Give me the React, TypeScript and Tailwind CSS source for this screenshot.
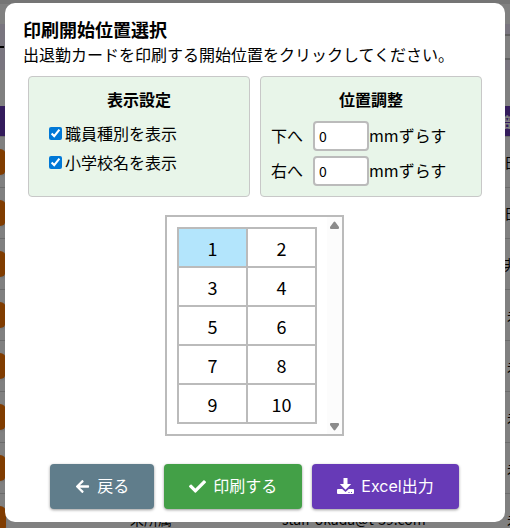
import type { ReactNode } from "react";
import { FaArrowLeft, FaCheck } from "react-icons/fa";

// ── Data ─────────────────────────────────────────────────────────────────────

const STAFF = [
  { id: 1, group: "", email: "", place: "日勤職員" },
  { id: 2, group: "", email: "", place: "日勤職員" },
  { id: 3, group: "", email: "", place: "非常勤務" },
  { id: 4, group: "", email: "", place: "未所属" },
  { id: 5, group: "", email: "", place: "未所属" },
  { id: 6, group: "", email: "", place: "未所属" },
  { id: 7, group: "", email: "", place: "未所属" },
  { id: 8, group: "未所属", email: "staff-okada@t-39.com", place: "未所属" },
];

const POSITION_ROWS = [
  [1, 2],
  [3, 4],
  [5, 6],
  [7, 8],
  [9, 10],
];

// ── Staff list behind the dialog ─────────────────────────────────────────────

function StaffList() {
  return (
    <div className="h-full overflow-hidden bg-[#808080] text-sm" aria-hidden="true">
      <div className="h-1 bg-[#757575]" />
      <div className="h-5" />
      <div className="flex h-[46px] items-center justify-between bg-[#79757f]">
        <div className="h-[2px] w-1 bg-black" />
        <div className="h-[26px] w-2 border-y-2 border-[#606060] bg-[#808080]" />
      </div>
      <div className="h-9" />
      <div className="flex h-[30px] items-center justify-end bg-[#341c5c]">
        <span className="w-[7px] overflow-hidden whitespace-nowrap font-bold text-[#808080]">部</span>
      </div>
      {STAFF.map((s) => (
        <div key={s.id} className="flex h-[51px] items-center border-t border-[#6c6c6c]">
          <div className="h-[26px] w-[6px] shrink-0 rounded-r-md bg-[#803c00] shadow" />
          <span className="ml-[124px] w-[152px] shrink-0">{s.group}</span>
          <span className="w-[222px] shrink-0">{s.email}</span>
          <span className="w-12 shrink-0 whitespace-nowrap text-center">{s.place}</span>
        </div>
      ))}
    </div>
  );
}

// ── Dialog parts ─────────────────────────────────────────────────────────────

function Panel({ title, children }: { title: string; children: ReactNode }) {
  return (
    <section className="min-h-[121px] flex-1 rounded border border-[#c8c8c8] bg-[#e8f5e9] px-[10px] pt-[10px]">
      <h3 className="text-center font-bold leading-6">{title}</h3>
      {children}
    </section>
  );
}

function CheckRow({ label }: { label: string }) {
  return (
    <label className="flex h-[29px] items-center gap-[3px] pl-[10px]">
      <input type="checkbox" defaultChecked className="size-[13px] accent-[#0078d7]" />
      <span className="pb-[2px]">{label}</span>
    </label>
  );
}

function OffsetRow({ id, label }: { id: string; label: string }) {
  return (
    <div className="flex items-center pb-[5px]">
      <label htmlFor={id} className="w-[42px] pb-[2px]">{label}</label>
      <input
        id={id}
        type="text"
        inputMode="numeric"
        defaultValue="0"
        className="h-[30px] w-14 rounded border-2 border-[#bbb] bg-white px-1 text-sm"
      />
      <span className="pb-[2px]">mmずらす</span>
    </div>
  );
}

function PositionPicker() {
  return (
    <div className="mx-auto flex border-2 border-[#bbb]">
      <table className="m-[10px] border-collapse text-lg leading-6">
        <tbody>
          {POSITION_ROWS.map((row) => (
            <tr key={row[0]}>
              {row.map((n) => (
                <td
                  key={n}
                  className={`h-[39px] w-[69px] cursor-pointer border-2 border-[#bbb] p-0 text-center ${n === 1 ? "bg-[#b3e5fc]" : ""}`}
                >
                  {n}
                </td>
              ))}
            </tr>
          ))}
        </tbody>
      </table>
      <div className="flex w-[15px] flex-col items-center justify-between bg-[#fcfcfc] pb-[3px] pt-1">
        <svg width="9" height="8" viewBox="0 0 9 8" fill="#8b8b8b">
          <path d="M3.5 1.2a1.2 1.2 0 0 1 2 0L9 6v1q0 1-1 1H1Q0 8 0 7V6z" />
        </svg>
        <svg width="9" height="8" viewBox="0 0 9 8" fill="#8b8b8b">
          <path d="M3.5 6.8a1.2 1.2 0 0 0 2 0L9 2V1q0-1-1-1H1Q0 0 0 1v1z" />
        </svg>
      </div>
    </div>
  );
}

function DownloadIcon() {
  return (
    <svg width="17" height="17" viewBox="0 0 17 17" fill="currentColor">
      <path d="M6.5 0h4v6h3.7L8.5 11.7 2.8 6h3.7z" />
      <path fillRule="evenodd" d="M1 11h4.2l3.3 3 3.3-3H16q1 0 1 1v3q0 1-1 1H1q-1 0-1-1v-3q0-1 1-1zm10.5 3v1h1v-1zm2.5 0v1h1v-1z" />
    </svg>
  );
}

function ActionButton({ icon, label, className }: { icon: ReactNode; label: string; className: string }) {
  return (
    <button
      type="button"
      className={`flex h-[45px] items-center gap-[7px] rounded px-[25px] font-['Inter','Noto_Sans_CJK_JP',sans-serif] text-white shadow-[0_1px_3px_rgba(0,0,0,0.4)] ${className}`}
    >
      {icon}
      <span className="pb-[2px]">{label}</span>
    </button>
  );
}

// ── App ──────────────────────────────────────────────────────────────────────

export default function App() {
  return (
    <div className="relative h-screen overflow-hidden font-['Noto_Sans_CJK_JP','Noto_Sans',sans-serif] text-base text-black">
      <StaffList />
      <div
        role="dialog"
        aria-labelledby="dialog-title"
        className="absolute inset-x-[5px] top-[3px] flex flex-col rounded-[10px] bg-white pb-[13px] pl-[18px] pr-[19px] pt-[13px]"
      >
        <h2 id="dialog-title" className="text-lg font-bold leading-[26px]">印刷開始位置選択</h2>
        <p className="leading-6">出退勤カードを印刷する開始位置をクリックしてください。</p>
        <div className="ml-[5px] mr-1 mt-[10px] flex gap-[10px]">
          <Panel title="表示設定">
            <div className="pt-2">
              <CheckRow label="職員種別を表示" />
              <CheckRow label="小学校名を表示" />
            </div>
          </Panel>
          <Panel title="位置調整">
            <div className="pt-[10px]">
              <OffsetRow id="offset-down" label="下へ" />
              <OffsetRow id="offset-right" label="右へ" />
            </div>
          </Panel>
        </div>
        <div className="mt-[18px] flex">
          <PositionPicker />
        </div>
        <div className="mt-[28px] flex justify-center gap-[10px]">
          <ActionButton icon={<FaArrowLeft className="size-[15px]" />} label="戻る" className="bg-[#607d8b]" />
          <ActionButton icon={<FaCheck className="size-[17px]" />} label="印刷する" className="bg-[#43a047]" />
          <ActionButton icon={<DownloadIcon />} label="Excel出力" className="bg-[#673ab7]" />
        </div>
      </div>
    </div>
  );
}
